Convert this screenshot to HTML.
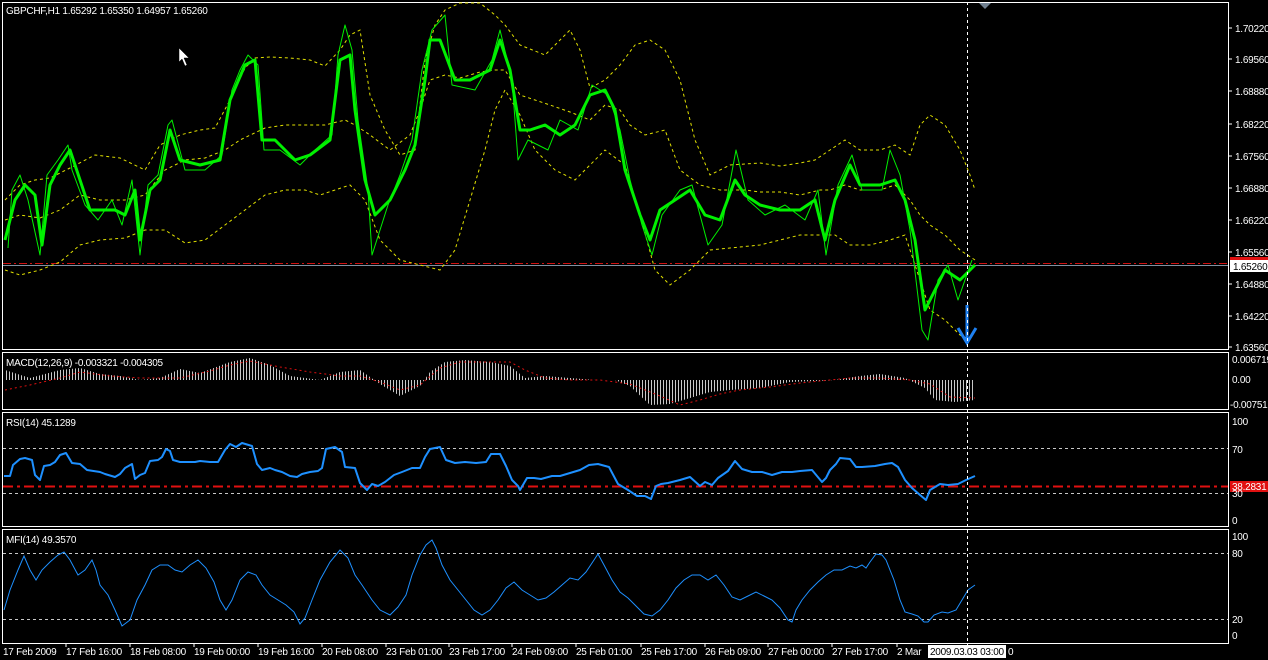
<!DOCTYPE html>
<html><head><meta charset="utf-8"><style>
html,body{margin:0;padding:0;background:#000;width:1268px;height:660px;overflow:hidden}
svg{display:block}
text{font-family:"Liberation Sans",sans-serif;font-size:10px;fill:#fff;letter-spacing:-0.25px}
</style></head><body>
<svg width="1268" height="660" viewBox="0 0 1268 660">
<defs>
<pattern id="hs" width="3" height="10" patternUnits="userSpaceOnUse"><rect x="0" y="0" width="1" height="10" fill="#c8c8c8"/></pattern>
</defs>
<g fill="none" stroke="#fff" stroke-width="1">
<rect x="2.5" y="2.5" width="1226" height="347"/>
<rect x="2.5" y="352.5" width="1226" height="57"/>
<rect x="2.5" y="412.5" width="1226" height="114"/>
<rect x="2.5" y="529.5" width="1226" height="114"/>
</g>
<g stroke="#fff">
<line x1="1228" y1="28" x2="1232" y2="28"/><line x1="1228" y1="59" x2="1232" y2="59"/><line x1="1228" y1="91" x2="1232" y2="91"/><line x1="1228" y1="124" x2="1232" y2="124"/><line x1="1228" y1="156" x2="1232" y2="156"/><line x1="1228" y1="188" x2="1232" y2="188"/><line x1="1228" y1="220" x2="1232" y2="220"/><line x1="1228" y1="252" x2="1232" y2="252"/><line x1="1228" y1="284" x2="1232" y2="284"/><line x1="1228" y1="316" x2="1232" y2="316"/><line x1="1228" y1="347" x2="1232" y2="347"/>
</g>
<line x1="3" y1="265.5" x2="1228" y2="265.5" stroke="#8090a0"/>
<line x1="3" y1="263.5" x2="1228" y2="263.5" stroke="#d01010" stroke-dasharray="8,3,2,3"/>
<g fill="none" stroke="#e0e000" stroke-width="1" stroke-dasharray="3,3">
<polyline points="5,200 20,185 35,180 50,178 70,168 95,155 120,158 145,170 160,145 180,135 200,130 215,128 230,100 245,68 255,58 270,57 290,58 310,60 325,66 340,50 350,35 360,30 370,95 385,130 400,155 415,150 425,60 435,25 445,10 460,3 480,3 495,15 505,25 520,45 545,55 570,30 580,50 590,88 605,80 620,65 635,45 650,40 665,50 680,80 695,140 710,175 730,165 760,163 780,166 800,163 815,160 830,150 845,140 860,150 880,150 895,145 910,155 920,125 930,115 945,125 960,150 970,175 975,190"/>
<polyline points="5,220 20,215 40,218 60,210 80,195 100,200 125,200 145,195 165,170 185,160 205,158 225,150 240,140 265,128 285,125 305,125 325,125 345,120 355,125 370,135 390,150 410,135 420,110 430,80 445,75 460,78 480,72 495,70 505,70 520,95 535,100 550,105 570,112 590,120 605,105 620,110 630,125 645,135 665,130 680,170 700,185 720,190 745,190 760,192 780,192 800,195 820,190 830,190 845,185 860,190 880,190 895,185 910,200 920,215 930,225 945,235 960,250 975,260"/>
<polyline points="5,270 20,275 40,270 60,262 80,245 100,240 125,238 145,230 165,230 185,243 205,240 225,225 245,210 265,195 285,190 305,190 320,195 335,190 350,185 365,200 380,240 400,260 420,265 440,270 455,250 470,200 485,150 495,110 505,90 520,115 535,150 555,170 575,180 590,165 605,150 625,165 640,215 655,270 670,285 690,270 710,250 730,248 760,245 780,240 800,235 820,235 835,235 850,245 870,245 890,240 905,235 920,280 930,310 945,320 960,335 970,340"/>
</g>
<g fill="none" stroke="#00f000" stroke-linejoin="round">
<polyline stroke-width="3" points="5,240 15,200 25,185 35,195 42,245 50,185 60,165 70,150 80,180 90,210 100,210 115,210 125,215 135,190 140,240 150,190 160,180 170,130 180,160 200,165 220,160 230,100 245,65 255,60 262,140 275,140 295,160 310,155 330,140 340,60 350,55 355,110 365,180 375,215 390,200 405,170 415,145 425,80 430,40 440,40 455,80 470,80 490,70 500,40 510,70 520,130 530,130 545,125 560,135 575,125 590,95 605,90 615,110 625,170 640,215 650,240 660,210 675,200 690,190 705,215 720,220 735,180 745,195 760,205 780,210 800,210 815,200 825,240 835,200 850,165 860,185 880,185 895,180 905,200 915,240 925,310 935,290 945,270 960,280 975,265"/>
<polyline stroke-width="1" points="8,248 12,190 20,175 28,200 40,255 47,175 58,160 68,145 72,170 85,205 98,220 112,200 122,225 132,180 140,255 148,185 158,175 168,125 172,120 185,170 205,170 222,155 232,90 240,70 248,55 258,65 264,150 280,150 300,165 315,150 332,135 338,55 345,25 352,50 358,120 368,190 372,255 388,205 400,175 412,140 422,70 432,30 445,15 452,85 475,90 492,60 500,30 512,80 518,160 528,140 548,150 560,120 578,130 592,85 608,95 620,130 630,180 642,225 652,255 662,215 680,190 692,185 708,245 722,225 736,150 748,200 765,215 785,205 805,220 818,190 826,255 838,185 852,155 862,190 882,190 890,150 900,175 910,230 922,330 928,340 938,280 948,265 958,300 972,260"/>
</g>
<path d="M179,48 L179,62 L182,59 L185,66 L187,65 L184,58 L189,58 Z" fill="#fff" stroke="#000" stroke-width="0.5"/>
<g stroke="#1e80f0" stroke-width="3" fill="none"><line x1="967" y1="305" x2="967" y2="342"/><polyline points="958,328 967,343 976,328"/></g>
<path d="M979,3 L991,3 L985,9 Z" fill="#708090"/>
<text x="6" y="14">GBPCHF,H1  1.65292 1.65350 1.64957 1.65260</text>
<polygon fill="url(#hs)" points="5,380 5,370 30,378 60,370 80,368 100,374 120,376 140,380 160,378 180,369 200,373 230,362 250,358 270,365 290,376 320,380 340,372 360,370 380,384 400,396 420,386 430,372 445,362 465,360 490,362 510,366 525,378 545,376 570,378 595,380 615,380 630,386 650,405 670,404 690,398 710,392 730,390 760,388 790,382 815,381 835,380 860,376 880,374 905,378 925,388 935,400 955,402 975,400 975,380"/>
<polyline fill="none" stroke="#e01010" stroke-dasharray="2,3" points="5,390 30,385 60,378 80,372 110,376 140,378 180,378 210,371 230,365 250,361 280,367 310,372 340,376 360,376 380,382 400,390 420,385 440,368 460,362 490,362 510,362 525,370 545,378 570,380 600,380 630,384 660,396 680,405 700,400 720,394 740,390 770,387 800,383 820,381 850,378 880,378 910,380 930,384 950,397 975,398"/>
<text x="6" y="366">MACD(12,26,9) -0.003321 -0.004305</text>
<g stroke="#c8c8c8" stroke-dasharray="3,3"><line x1="3" y1="448.5" x2="1228" y2="448.5"/><line x1="3" y1="493.5" x2="1228" y2="493.5"/></g>
<line x1="3" y1="486.5" x2="1228" y2="486.5" stroke="#e01010" stroke-width="2" stroke-dasharray="10,4,3,4"/>
<polyline fill="none" stroke="#1e90ff" stroke-width="2" stroke-linejoin="round" points="4,476 10,476 13,465 20,459 25,458 32,460 35,475 40,480 44,466 50,465 55,462 60,455 66,453 72,463 80,464 87,470 100,472 105,474 115,477 120,474 125,468 132,464 135,479 140,475 145,473 150,461 158,460 162,457 166,449 170,451 173,460 180,462 190,462 195,462 200,461 210,462 218,462 225,450 230,444 236,447 242,443 252,446 257,464 262,470 270,468 275,470 282,472 290,476 297,477 302,474 310,472 318,471 322,468 326,449 335,447 342,452 345,467 355,468 360,483 367,490 372,484 378,486 385,482 394,475 402,472 412,468 420,468 425,457 430,449 440,447 446,460 455,463 465,462 476,463 486,462 491,454 500,454 506,466 512,480 518,486 520,490 527,478 534,478 541,479 552,476 560,476 570,473 580,470 589,465 598,464 609,467 618,484 628,490 637,496 645,496 651,499 656,486 661,484 668,483 680,480 690,477 700,486 705,482 712,485 718,478 728,471 735,461 742,469 752,472 762,472 772,475 782,472 792,472 800,471 812,470 822,482 826,478 830,470 836,464 840,458 850,459 856,467 862,467 875,466 885,464 892,463 898,467 905,480 912,488 920,495 926,500 930,490 940,484 948,485 958,484 966,480 975,476"/>
<text x="6" y="426">RSI(14) 45.1289</text>
<g stroke="#c8c8c8" stroke-dasharray="3,3"><line x1="3" y1="553.5" x2="1228" y2="553.5"/><line x1="3" y1="619.5" x2="1228" y2="619.5"/></g>
<polyline fill="none" stroke="#1e90ff" stroke-width="1" points="4,610 10,590 18,570 24,556 30,570 36,580 42,570 50,562 58,555 64,552 70,560 78,575 85,570 92,560 96,570 100,585 108,595 115,610 122,626 130,620 137,600 145,585 152,570 160,565 168,565 175,570 182,572 190,565 198,560 206,568 214,582 220,600 226,610 232,600 240,580 248,572 256,575 262,585 270,595 278,600 286,605 294,612 300,624 305,618 312,600 320,580 330,562 340,550 348,558 355,575 362,585 372,600 380,610 390,615 398,607 406,595 412,575 420,555 426,545 432,540 436,548 442,565 450,580 458,590 466,600 474,610 482,615 490,610 498,600 506,588 514,582 522,590 530,595 538,600 546,598 554,592 562,585 570,578 578,580 586,572 594,560 598,554 604,565 612,580 620,592 628,598 636,606 644,614 652,616 660,610 668,600 676,588 684,580 692,575 700,575 708,580 716,575 724,585 732,597 740,600 748,596 756,592 764,596 772,600 780,608 788,620 792,622 796,610 802,600 810,590 818,582 826,575 834,570 842,570 850,566 856,568 862,565 866,568 870,562 876,554 882,555 886,560 894,580 900,600 905,612 912,614 918,616 924,622 928,622 934,615 942,612 948,613 956,610 962,600 968,590 975,585"/>
<text x="6" y="543">MFI(14) 49.3570</text>
<line x1="967.5" y1="2" x2="967.5" y2="645" stroke="#fff" stroke-dasharray="3,3"/>
<g>
<text x="1235" y="32">1.70220</text><text x="1235" y="63">1.69560</text><text x="1235" y="95">1.68880</text><text x="1235" y="128">1.68220</text><text x="1235" y="160">1.67560</text><text x="1235" y="192">1.66880</text><text x="1235" y="224">1.66220</text><text x="1235" y="256">1.65560</text><text x="1235" y="288">1.64880</text><text x="1235" y="320">1.64220</text><text x="1235" y="351">1.63560</text>
<rect x="1230" y="257" width="38" height="3" fill="#e01010"/>
<rect x="1230" y="260" width="38" height="12" fill="#fff"/>
<text x="1233" y="270" style="fill:#000">1.65260</text>
<text x="1232" y="363">0.006719</text><text x="1232" y="383">0.00</text><text x="1230" y="408">-0.00751</text>
<text x="1232" y="425">100</text><text x="1232" y="453">70</text>
<rect x="1230" y="481" width="38" height="11" fill="#e01010"/><text x="1232" y="490">38.2831</text>
<text x="1232" y="497">30</text><text x="1232" y="524">0</text>
<text x="1232" y="540">100</text><text x="1232" y="557">80</text><text x="1232" y="623">20</text><text x="1232" y="639">0</text>
</g>
<g stroke="#fff"><line x1="66" y1="643" x2="66" y2="647"/><line x1="130" y1="643" x2="130" y2="647"/><line x1="194" y1="643" x2="194" y2="647"/><line x1="258" y1="643" x2="258" y2="647"/><line x1="322" y1="643" x2="322" y2="647"/><line x1="386" y1="643" x2="386" y2="647"/><line x1="449" y1="643" x2="449" y2="647"/><line x1="512" y1="643" x2="512" y2="647"/><line x1="576" y1="643" x2="576" y2="647"/><line x1="641" y1="643" x2="641" y2="647"/><line x1="705" y1="643" x2="705" y2="647"/><line x1="768" y1="643" x2="768" y2="647"/><line x1="832" y1="643" x2="832" y2="647"/><line x1="897" y1="643" x2="897" y2="647"/></g>
<g>
<text x="3" y="655">17 Feb 2009</text><text x="66" y="655">17 Feb 16:00</text><text x="130" y="655">18 Feb 08:00</text><text x="194" y="655">19 Feb 00:00</text><text x="258" y="655">19 Feb 16:00</text><text x="322" y="655">20 Feb 08:00</text><text x="386" y="655">23 Feb 01:00</text><text x="449" y="655">23 Feb 17:00</text><text x="512" y="655">24 Feb 09:00</text><text x="576" y="655">25 Feb 01:00</text><text x="641" y="655">25 Feb 17:00</text><text x="705" y="655">26 Feb 09:00</text><text x="768" y="655">27 Feb 00:00</text><text x="832" y="655">27 Feb 17:00</text><text x="897" y="655">2 Mar</text>
<rect x="928" y="645" width="78" height="13" fill="#fff"/><text x="930" y="655" style="fill:#000">2009.03.03 03:00</text><text x="1008" y="655">0</text>
</g>
</svg>
</body></html>
